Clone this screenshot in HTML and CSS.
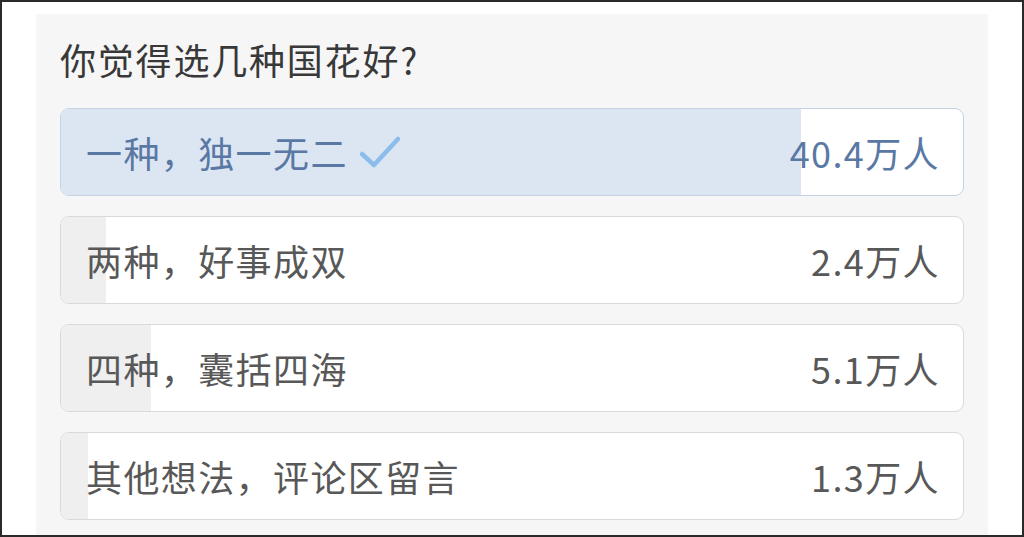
FILE: index.html
```html
<!DOCTYPE html>
<html lang="zh">
<head>
<meta charset="utf-8">
<link rel="stylesheet" href="styles.css">
</head>
<body>
<div class="frame">
  <div class="panel">
    <h1 class="title">你觉得选几种国花好?</h1>
    <div class="options">
      <div class="option selected">
        <div class="fill" style="width:82%"></div>
        <div class="label">一种，独一无二<svg class="check" viewBox="0 0 44 34" width="44" height="34"><path d="M4 19 L16 30 L40 4" fill="none" stroke="#8cbcec" stroke-width="4.5" stroke-linecap="round" stroke-linejoin="round"/></svg></div>
        <div class="count">40.4万人</div>
      </div>
      <div class="option">
        <div class="fill" style="width:5%"></div>
        <div class="label">两种，好事成双</div>
        <div class="count">2.4万人</div>
      </div>
      <div class="option">
        <div class="fill" style="width:10%"></div>
        <div class="label">四种，囊括四海</div>
        <div class="count">5.1万人</div>
      </div>
      <div class="option">
        <div class="fill" style="width:3%"></div>
        <div class="label">其他想法，评论区留言</div>
        <div class="count">1.3万人</div>
      </div>
    </div>
  </div>
</div>
</body>
</html>
```
FILE: styles.css
```css
* { box-sizing: border-box; }
html, body { margin: 0; padding: 0; }
body {
  width: 1024px;
  height: 537px;
  overflow: hidden;
  background: #fff;
  font-family: "Noto Sans CJK SC", "Noto Sans", sans-serif;
}
.frame {
  width: 1024px;
  height: 537px;
  border: 2px solid #2a2a2a;
  padding: 12px 34px 0 34px;
  background: #fff;
  overflow: hidden;
}
.panel {
  background: #f6f6f6;
  height: 100%;
  padding: 21px 24px 0 24px;
}
.title {
  margin: 0;
  font-size: 36px;
  font-weight: 400;
  letter-spacing: 1.8px;
  color: #383838;
  line-height: 48px;
  height: 73px;
}
.options {
  display: flex;
  flex-direction: column;
  gap: 20px;
}
.option {
  position: relative;
  height: 88px;
  border: 1px solid #d9d9d9;
  border-radius: 9px;
  background: #fff;
  overflow: hidden;
  display: flex;
  align-items: center;
  justify-content: space-between;
  padding: 0 25px 0 25px;
  color: #585858;
  font-size: 36px;
  letter-spacing: 1.4px;
}
.option.selected {
  border-color: #c3d3e6;
  color: #5a78a4;
}
.fill {
  position: absolute;
  left: 0;
  top: 0;
  bottom: 0;
  background: #efefef;
}
.selected .fill { background: #dce6f2; }
.label, .count {
  position: relative;
  display: flex;
  align-items: center;
}
.count { margin-right: -2px; }
.check { margin-left: 10px; }
```
